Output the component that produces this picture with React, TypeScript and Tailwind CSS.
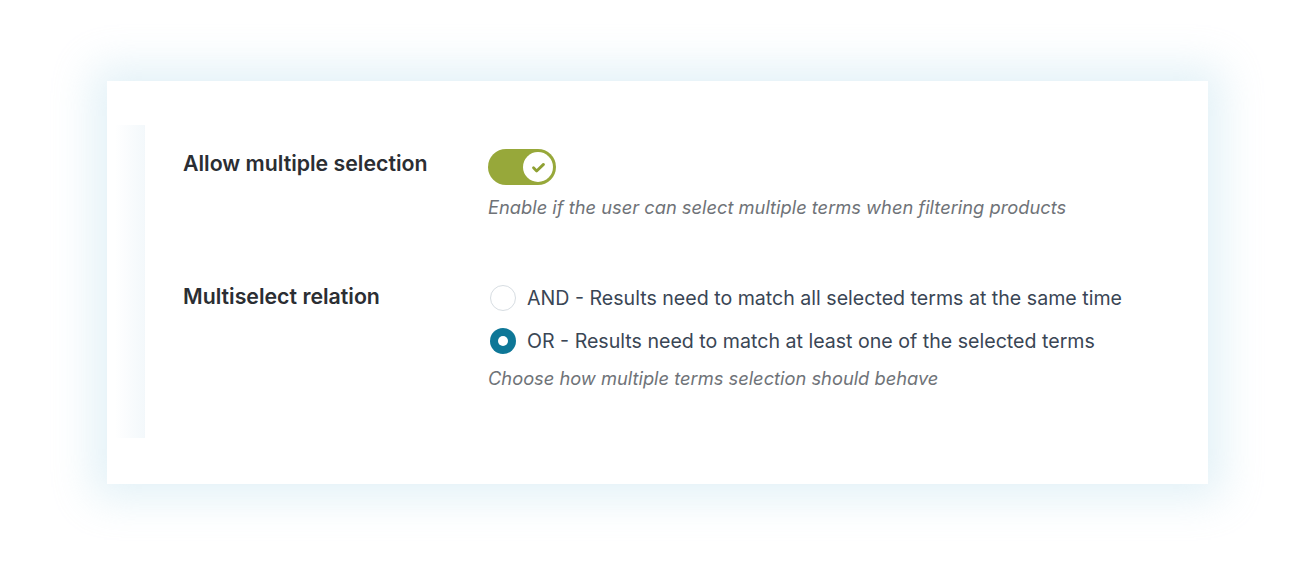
import React, { useState } from 'react';

const Toggle: React.FC<{ on: boolean; onChange: (v: boolean) => void }> = ({ on, onChange }) => (
  <button
    onClick={() => onChange(!on)}
    className={`relative flex h-[36px] w-[68px] items-center rounded-full px-[3px] ${on ? 'justify-end bg-[#97a83a]' : 'justify-start bg-[#cfd6dc]'}`}
  >
    <span className="flex h-[30px] w-[30px] items-center justify-center rounded-full bg-white">
      {on && (
        <svg width="15" height="15" viewBox="0 0 24 24" fill="none" stroke="#8fa032" strokeWidth="4.5" strokeLinecap="round" strokeLinejoin="round">
          <path d="M4 12.5l5 5L20 7" />
        </svg>
      )}
    </span>
  </button>
);

const Radio: React.FC<{ checked: boolean; label: string; onClick: () => void }> = ({ checked, label, onClick }) => (
  <label onClick={onClick} className="flex cursor-pointer items-center gap-[11px]">
    <span
      className={`flex h-[26px] w-[26px] shrink-0 items-center justify-center rounded-full ${checked ? 'bg-[#0e7797]' : 'border-[1.5px] border-[#d7dde2] bg-white'}`}
    >
      {checked && <span className="h-[10px] w-[10px] rounded-full bg-white" />}
    </span>
    <span className="text-[19.6px] leading-[28px] text-[#3a4655]">{label}</span>
  </label>
);

export default function App() {
  const [multi, setMulti] = useState(true);
  const [relation, setRelation] = useState<'and' | 'or'>('or');

  return (
    <div className="flex h-[581px] w-full items-start justify-start bg-white pl-[107px] pt-[81px] font-['Inter','Noto_Sans',sans-serif]">
      <div className="h-[403px] w-[1101px] bg-white pl-[37px] pt-[44px] shadow-[0_0_40px_14px_rgba(190,225,238,0.45)]">
        <div className="relative h-[313px] border-l-[1.5px] border-[#dfe6ec] pl-[38px] pt-[24px]">
          <div className="pointer-events-none absolute left-[-30px] top-0 h-full w-[30px] bg-gradient-to-r from-transparent to-[#f3f8fb]" />
          <div className="flex">
            <div className="w-[305px] text-[21.3px] leading-[28px] font-semibold text-[#2b2e33]">Allow multiple selection</div>
            <div className="flex flex-col">
              <Toggle on={multi} onChange={setMulti} />
              <p className="mt-[9px] text-[18.3px] leading-[26px] italic text-[#6f7378]">
                Enable if the user can select multiple terms when filtering products
              </p>
            </div>
          </div>
          <div className="mt-[64px] flex">
            <div className="-mt-[2px] w-[305px] text-[21.3px] leading-[28px] font-semibold text-[#2b2e33]">Multiselect relation</div>
            <div className="flex flex-col gap-[15px] pl-[2px]">
              <Radio
                checked={relation === 'and'}
                label="AND - Results need to match all selected terms at the same time"
                onClick={() => setRelation('and')}
              />
              <Radio
                checked={relation === 'or'}
                label="OR - Results need to match at least one of the selected terms"
                onClick={() => setRelation('or')}
              />
              <p className="-mt-[5px] ml-[-2px] text-[18.3px] leading-[26px] italic text-[#6f7378]">
                Choose how multiple terms selection should behave
              </p>
            </div>
          </div>
        </div>
      </div>
    </div>
  );
}
